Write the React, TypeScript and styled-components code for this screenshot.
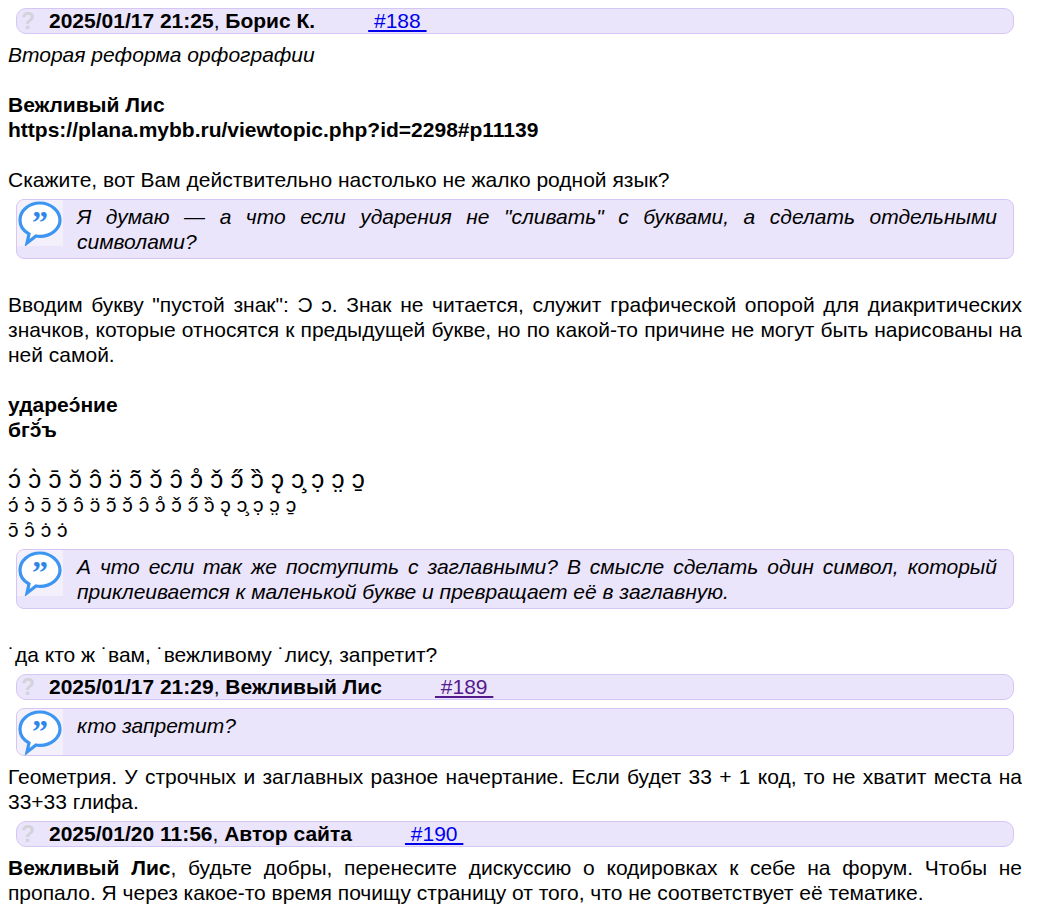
import React from "react";
import styled, { createGlobalStyle } from "styled-components";

const G = createGlobalStyle`
  body { margin: 1px 16px 8px 8px; font-family: "Liberation Sans", Arial, sans-serif; font-size: 21px; line-height: 25px; color: #000; background: #fff; }
`;
const Header = styled.div`
  margin: 7px 8px 8px; height: 24px; background: #ebe5fc; border: 1px solid #d4c6f5; border-radius: 10px;
  display: flex; align-items: center; line-height: 24px;
`;
const Q = styled.span`
  width: 16px; margin-left: 3px; margin-right: 13px; color: #d3d3dc; font-weight: bold; font-size: 23px; text-align: center;
`;
const Link = styled.a<{ $v?: boolean }>`
  margin-left: 53px; color: ${p => (p.$v ? "#551a8b" : "#0000ee")}; text-decoration: underline; white-space: pre;
`;
const P = styled.div`text-align: justify;`;
const Quote = styled.div`
  margin: 7px 8px 8px; background: #ebe5fc; border: 1px solid #d4c6f5; border-radius: 8px; overflow: hidden;
  display: flex; align-items: flex-start; min-height: 33px;
`;
const QIcon = styled.div`
  width: 46px; height: 46px; flex: none; margin-right: 14px; background: #f3f0fb; display: flex; align-items: center; justify-content: center;
`;
const QText = styled.div`
  font-style: italic; text-align: justify; padding: 4px 16px 4px 0; flex: 1;
`;
const Big = styled.div`font-size: 26px; line-height: 25px;`;
const Blank = styled.div`height: 25px;`;

const Bubble = () => (
  <QIcon>
    <svg width="46" height="46" viewBox="0 0 46 46">
      <path d="M23 3C12 3 3 10.5 3 20c0 6 3.5 11 9 14l-2 9 9-7c1.3.2 2.6.3 4 .3 11 0 20-7.5 20-16.3S34 3 23 3z" fill="#fff" stroke="#3c95f0" strokeWidth="3.2" />
      <text x="23" y="33" textAnchor="middle" fontFamily="Liberation Serif, serif" fontWeight="bold" fontSize="32" fill="#2e86e8">”</text>
    </svg>
  </QIcon>
);

const Head = ({ d, n, id, v }: { d: string; n: string; id: string; v?: boolean }) => (
  <Header>
    <Q>?</Q>
    <span><b>{d}</b>, <b>{n}</b></span>
    <Link $v={v} href="#">{` ${id} `}</Link>
  </Header>
);

const L1 = "ɔ\u0301 ɔ\u0300 ɔ\u0304 ɔ\u0306 ɔ\u0302 ɔ\u0308 ɔ\u0303 ɔ\u030C ɔ\u0311 ɔ\u030A ɔ\u030C ɔ\u030B ɔ\u030F ɔ\u0328 ɔ\u0327 ɔ\u0323 ɔ\u0324 ɔ\u0331";

export default function App() {
  return (
    <>
      <G />
      <Head d="2025/01/17 21:25" n="Борис К." id="#188" />
      <P><i>Вторая реформа орфографии</i></P>
      <Blank />
      <P><b>Вежливый Лис<br />https://plana.mybb.ru/viewtopic.php?id=2298#p11139</b></P>
      <Blank />
      <P>Скажите, вот Вам действительно настолько не жалко родной язык?</P>
      <Quote>
        <Bubble />
        <QText>Я думаю — а что если ударения не "сливать" с буквами, а сделать отдельными символами?</QText>
      </Quote>
      <Blank />
      <P>Вводим букву "пустой знак": Ɔ ɔ. Знак не читается, служит графической опорой для диакритических значков, которые относятся к предыдущей букве, но по какой-то причине не могут быть нарисованы на ней самой.</P>
      <Blank />
      <P><b>ударе{"ɔ\u0301"}ние<br />бг{"ɔ\u0306\u0301"}ъ</b></P>
      <Blank />
      <Big>{L1}</Big>
      <div>{L1}</div>
      <div>{"ɔ\u0304 ɔ\u0311 ɔ\u0307 ɔ\u0307"}</div>
      <Quote>
        <Bubble />
        <QText>А что если так же поступить с заглавными? В смысле сделать один символ, который приклеивается к маленькой букве и превращает её в заглавную.</QText>
      </Quote>
      <Blank />
      <P>˙да кто ж ˙вам, ˙вежливому ˙лису, запретит?</P>
      <Head d="2025/01/17 21:29" n="Вежливый Лис" id="#189" v />
      <Quote>
        <Bubble />
        <QText>кто запретит?</QText>
      </Quote>
      <P>Геометрия. У строчных и заглавных разное начертание. Если будет 33 + 1 код, то не хватит места на 33+33 глифа.</P>
      <Head d="2025/01/20 11:56" n="Автор сайта" id="#190" />
      <P><b>Вежливый Лис</b>, будьте добры, перенесите дискуссию о кодировках к себе на форум. Чтобы не пропало. Я через какое-то время почищу страницу от того, что не соответствует её тематике.</P>
    </>
  );
}
